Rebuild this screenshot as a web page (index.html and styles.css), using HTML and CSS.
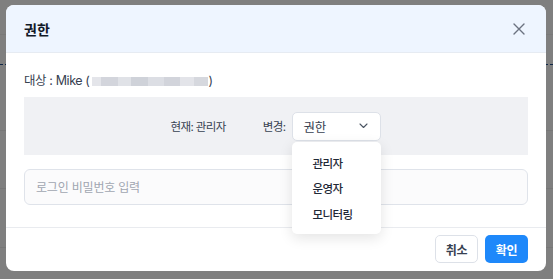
FILE: index.html
```html
<!DOCTYPE html>
<html lang="ko">
<head>
    <meta charset="UTF-8">
    <meta name="viewport" content="width=device-width, initial-scale=1.0">
    <title>권한</title>
    <link rel="stylesheet" href="styles.css">
</head>
<body>

    <!-- Page behind the dialog -->
    <div class="page">
        <div class="page-row row-top"></div>
        <div class="page-row row-head"></div>
        <div class="page-row row-a"></div>
        <div class="page-row row-b"></div>
        <div class="page-row row-c"></div>
    </div>

    <!-- Dim layer + dialog -->
    <div class="overlay">
        <div class="modal">
            <div class="modal-header">
                <h2 class="modal-title">권한</h2>
                <span class="modal-close">
                    <svg width="12" height="12" viewBox="0 0 12 12">
                        <path d="M1 1 L11 11 M11 1 L1 11" stroke="#6b7280" stroke-width="1.4" stroke-linecap="round" fill="none"/>
                    </svg>
                </span>
            </div>

            <div class="modal-body">
                <p class="target">대상 : Mike (<span class="masked"></span>)</p>

                <div class="role-panel">
                    <span class="role-current">현재: 관리자</span>
                    <span class="role-label">변경:</span>
                    <div class="role-select">
                        <div class="select-box">
                            <span>권한</span>
                            <svg width="9" height="6" viewBox="0 0 9 6">
                                <path d="M1 1 L4.5 4.5 L8 1" stroke="#4b5563" stroke-width="1.1" fill="none" stroke-linecap="round" stroke-linejoin="round"/>
                            </svg>
                        </div>
                        <ul class="select-menu">
                            <li>관리자</li>
                            <li>운영자</li>
                            <li>모니터링</li>
                        </ul>
                    </div>
                </div>

                <input class="password-input" type="password" placeholder="로그인 비밀번호 입력">
            </div>

            <div class="modal-footer">
                <button class="btn btn-cancel">취소</button>
                <button class="btn btn-ok">확인</button>
            </div>
        </div>
    </div>

</body>
</html>
```

FILE: styles.css
```css
/* Reset */
* {
    margin: 0;
    padding: 0;
    box-sizing: border-box;
}

body {
    width: 553px;
    height: 279px;
    overflow: hidden;
    position: relative;
    background: #ffffff;
    font-family: Inter, "Noto Sans CJK KR", sans-serif;
    color: #1f2937;
}

/* Page under the overlay */
.page {
    display: flex;
    flex-direction: column;
}

.page-row {
    border-bottom: 1px solid #e5e7eb;
}

.row-top {
    height: 35px;
    border-bottom-color: #f2f2f2;
}

.row-head {
    height: 30px;
    border-bottom: 1px dashed #1f4f8f;
}

.row-a {
    height: 66px;
    border-bottom-color: #eeeeee;
}

.row-b {
    height: 58px;
    border-bottom-color: #eeeeee;
}

.row-c {
    height: 59px;
    border-bottom-color: #eeeeee;
}

/* Dim layer */
.overlay {
    position: absolute;
    inset: 0;
    background: rgba(0, 0, 0, 0.5);
    padding: 5px 7px 0 6px;
}

.modal {
    width: 540px;
    height: 266px;
    background: #fff;
    border-radius: 8px;
    overflow: hidden;
    display: flex;
    flex-direction: column;
}

/* Header */
.modal-header {
    height: 48px;
    flex-shrink: 0;
    background: #eef5ff;
    border-bottom: 1px solid #e6ebf2;
    display: flex;
    align-items: center;
    justify-content: space-between;
    padding: 0 21px 0 18px;
}

.modal-title {
    font-size: 14px;
    font-weight: 600;
    color: #111827;
}

.modal-close {
    display: flex;
    margin-top: 1px;
}

/* Body */
.modal-body {
    padding: 19px 18px 22px;
    display: flex;
    flex-direction: column;
}

.target {
    font-size: 12.5px;
    letter-spacing: -0.4px;
    line-height: 18px;
    color: #374151;
    display: flex;
    align-items: center;
}

.masked {
    display: inline-block;
    width: 116px;
    height: 9px;
    margin: 0 1px 0 2px;
    background: linear-gradient(90deg, #e4e5ea 0 8%, #d3d5dc 8% 22%, #e0e2e7 22% 34%, #cfd2d9 34% 48%, #dcdee4 48% 62%, #d2d4db 62% 76%, #e3e4e9 76% 88%, #d6d8de 88% 100%);
    filter: blur(0.6px);
}

.role-panel {
    margin-top: 7px;
    height: 58px;
    background: #f0f1f4;
    display: flex;
    align-items: center;
    justify-content: center;
    font-size: 11.5px;
    letter-spacing: -0.6px;
    color: #374151;
}

.role-current {
    margin-right: 37px;
}

.role-label {
    margin-right: 7px;
}

.role-select {
    position: relative;
    width: 89px;
    letter-spacing: -0.3px;
}

.select-box {
    height: 29px;
    background: #fff;
    border: 1px solid #dde1e8;
    border-radius: 5px;
    display: flex;
    align-items: center;
    justify-content: space-between;
    padding: 0 12px 0 10px;
    font-size: 12.5px;
    color: #374151;
}

/* Open dropdown menu */
.select-menu {
    position: absolute;
    top: 30px;
    left: 0;
    width: 89px;
    list-style: none;
    background: #fff;
    border-radius: 5px;
    box-shadow: 0 4px 14px rgba(0, 0, 0, 0.11);
    padding: 10px 0 6px 20px;
    z-index: 10;
}

.select-menu li {
    height: 25.5px;
    line-height: 25.5px;
    font-size: 11.5px;
    font-weight: 500;
    letter-spacing: -0.6px;
    color: #1f2937;
}

.password-input {
    margin-top: 14px;
    height: 36px;
    border: 1px solid #dfe3ea;
    border-radius: 6px;
    background: #fbfbfc;
    padding: 0 11px;
    font-family: Inter, "Noto Sans CJK KR", sans-serif;
    font-size: 12px;
    letter-spacing: -0.2px;
    outline: none;
}

.password-input::placeholder {
    color: #a0a6b1;
}

/* Footer */
.modal-footer {
    border-top: 1px solid #e9ebef;
    flex: 1;
    display: flex;
    justify-content: flex-end;
    align-items: center;
    gap: 7px;
    padding: 0 18px 1px;
}

.btn {
    height: 28px;
    width: 43px;
    border-radius: 5px;
    font-family: Inter, "Noto Sans CJK KR", sans-serif;
    font-size: 12px;
    font-weight: 600;
    letter-spacing: -0.3px;
}

.btn-cancel {
    background: #fff;
    border: 1px solid #dde1e8;
    color: #374151;
}

.btn-ok {
    background: #1e88fa;
    border: none;
    color: #fff;
}
```
